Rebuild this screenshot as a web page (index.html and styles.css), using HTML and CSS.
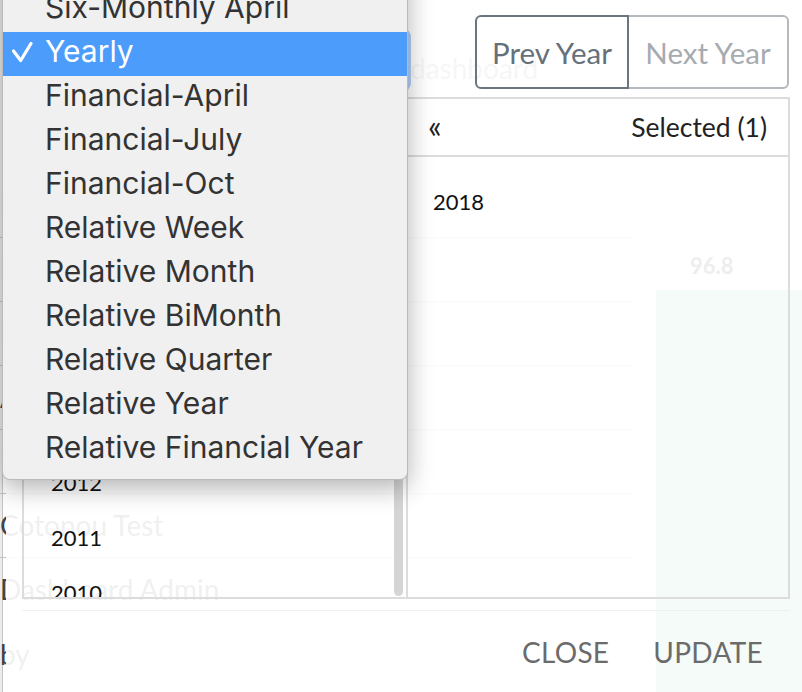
FILE: index.html
```html
<!DOCTYPE html>
<html lang="en">
<head>
<meta charset="utf-8">
<title>Period picker</title>
<link rel="stylesheet" href="styles.css">
</head>
<body>
<div class="page">
  <header class="bg-head"><span class="bg-title">dashboard</span></header>
  <div class="bg-body">
    <div class="bg-table">
      <div class="bg-row">Ebola Response</div>
      <div class="bg-row">EPI Coverage</div>
      <div class="bg-row">Immunization</div>
      <div class="bg-row">ANC Overview</div>
      <div class="bg-row">Malaria</div>
      <div class="bg-row">Cotonou Test</div>
      <div class="bg-row">Dashboard Admin</div>
      <div class="bg-note">by</div>
    </div>
    <div class="bg-chart">
      <div class="bg-val">96.8</div>
      <div class="bg-bar"></div>
    </div>
  </div>
</div>

<div class="modal">
  <div class="toolbar">
    <div class="period-select">Yearly</div>
    <div class="btn-group">
      <button class="btn btn-prev">Prev Year</button>
      <button class="btn btn-next">Next Year</button>
    </div>
  </div>
  <div class="panels">
    <div class="panel panel-left">
      <div class="panel-head"><span>Available (18)</span><span class="arrows">»</span></div>
      <div class="list list-left">
        <div class="item">2017</div>
        <div class="item">2016</div>
        <div class="item">2015</div>
        <div class="item">2014</div>
        <div class="item">2013</div>
        <div class="item">2012</div>
        <div class="item">2011</div>
        <div class="item">2010</div>
        <div class="item">2009</div>
      </div>
      <div class="scroll-thumb"></div>
    </div>
    <div class="panel panel-right">
      <div class="panel-head"><span class="arrows">«</span><span>Selected (1)</span></div>
      <div class="list list-right">
        <div class="item">2018</div>
      </div>
    </div>
  </div>
  <div class="footer">
    <button class="footer-btn">CLOSE</button>
    <button class="footer-btn">UPDATE</button>
  </div>
</div>

<div class="menu">
  <div class="menu-item">Six-Monthly</div>
  <div class="menu-item">Six-Monthly April</div>
  <div class="menu-item active"><svg class="check" viewBox="0 0 21 21"><polyline points="1.5,9 8.7,18.5 19,1.5"/></svg>Yearly</div>
  <div class="menu-item">Financial-April</div>
  <div class="menu-item">Financial-July</div>
  <div class="menu-item">Financial-Oct</div>
  <div class="menu-item">Relative Week</div>
  <div class="menu-item">Relative Month</div>
  <div class="menu-item">Relative BiMonth</div>
  <div class="menu-item">Relative Quarter</div>
  <div class="menu-item">Relative Year</div>
  <div class="menu-item">Relative Financial Year</div>
</div>
</body>
</html>
```

FILE: styles.css
```css
* { box-sizing: border-box; margin: 0; padding: 0; }

html, body { width: 802px; height: 692px; overflow: hidden; }

body {
  position: relative;
  font-family: Lato, "Open Sans", sans-serif;
  background: #fff;
}

/* background page (seen through the modal) */
.page {
  height: 692px;
  color: #444;
  background: linear-gradient(to right, #ececec 0 2px, #c4c4c4 2px 3px, #fff 3px);
}
.bg-head { height: 174px; padding: 51px 0 0 410px; }
.bg-title { font-size: 28px; line-height: 34px; color: #8c8c8c; }
.bg-body { display: grid; grid-template-columns: 633px 146px; column-gap: 23px; }
.bg-row {
  height: 64px;
  border-bottom: 1px solid #c2c2c2;
  font-size: 28px;
  line-height: 63px;
  white-space: nowrap;
  overflow: hidden;
}
.bg-row:nth-child(7) { border-bottom: 0; }
.bg-note { font-size: 28px; line-height: 64px; }
.bg-chart { padding-top: 80px; display: flex; flex-direction: column; }
.bg-val { font-size: 22px; line-height: 24px; font-weight: 900; color: #2a2a2a; padding-left: 34px; margin-bottom: 12px; }
.bg-bar { height: 420px; background: rgb(130, 205, 180); }

/* modal */
.modal {
  position: absolute;
  left: 6px; top: 0; right: 0; bottom: 0;
  background: rgba(255, 255, 255, 0.92);
  padding: 15px 12px 0 16px;
  display: flex;
  flex-direction: column;
}
.toolbar { display: flex; justify-content: space-between; align-items: flex-end; height: 74px; }
.period-select {
  width: 386px; height: 58px;
  border: 1px solid #9cc4f5;
  border-radius: 6px;
  box-shadow: 0 0 0 3px rgba(80, 150, 245, 0.45);
  background: #fff;
  font-size: 24px; line-height: 56px; padding-left: 16px; color: #333;
}
.btn-group { display: flex; height: 74px; margin-right: 1px; }
.btn {
  font-family: inherit;
  font-size: 29.5px;
  background: transparent;
  height: 74px;
  border: 2px solid;
  cursor: pointer;
  padding: 0;
}
.btn-prev { width: 154px; border-color: #6c747d; color: #66707a; border-radius: 6px 0 0 6px; }
.btn-next { width: 160px; border-color: #b4b9be; border-left: 0; color: #a6abb0; border-radius: 0 6px 6px 0; }

.panels { display: grid; grid-template-columns: 384px 384px; height: 502px; margin-top: 8px; }
.panel { position: relative; overflow: hidden; border: 2px solid #dcdcdc; }
.panel-left { border-right: 0; }
.panel-head {
  height: 58px;
  border-bottom: 2px solid #dcdcdc;
  display: flex; justify-content: space-between; align-items: center;
  padding: 0 21px 0 20px;
  font-size: 26.5px; color: #222;
}
.arrows { font-size: 32px; line-height: 1; margin-top: -2px; }
.list { font-size: 22px; color: #111; }
.list-left { padding-top: 23px; }
.list-right { padding-top: 17px; }
.item { height: 55px; line-height: 55px; padding-left: 25px; }
.list-left .item { padding-left: 27px; }
.scroll-thumb {
  position: absolute;
  right: 3px; bottom: 1px;
  width: 9px; height: 280px;
  border-radius: 5px;
  background: #d5d5d5;
}

.footer {
  margin-top: 11px;
  border-top: 1px solid #f0f0f0;
  display: flex; justify-content: flex-end; gap: 44px;
  padding: 24px 27px 0 0;
}
.footer-btn {
  font-family: inherit;
  font-size: 28px; line-height: 34px;
  color: #6b6b6b;
  background: none; border: 0;
  letter-spacing: 0.3px;
}

/* native-looking popup menu */
.menu {
  position: absolute;
  left: 2px; top: -57px;
  width: 406px;
  background: #f0f0f0;
  border: 1px solid rgba(0, 0, 0, 0.22);
  border-radius: 8px;
  box-shadow: 0 8px 26px rgba(0, 0, 0, 0.3);
  padding-bottom: 7px;
  font-family: Inter, "Liberation Sans", sans-serif;
  font-size: 30px;
  color: #333;
}
.menu-item {
  position: relative;
  height: 44px;
  line-height: 38px;
  padding-left: 42px;
  white-space: nowrap;
}
.menu-item.active { background: #4b9cfb; color: #fff; }
.check { position: absolute; left: 9px; top: 10px; width: 21px; height: 21px; }
.check polyline { fill: none; stroke: #fff; stroke-width: 3.2; stroke-linecap: round; stroke-linejoin: round; }
```
